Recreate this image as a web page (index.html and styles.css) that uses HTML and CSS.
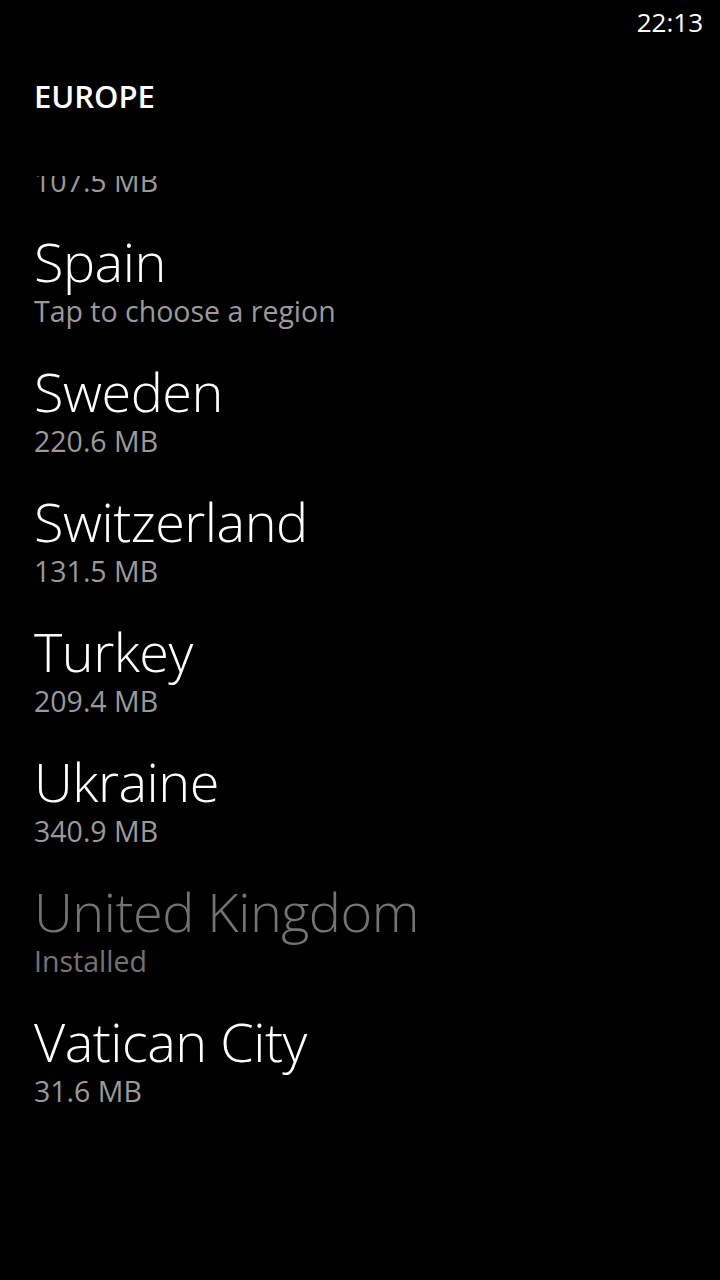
FILE: index.html
```html
<!DOCTYPE html>
<html lang="en">
<head>
    <meta charset="UTF-8">
    <meta name="viewport" content="width=device-width, initial-scale=1.0">
    <title>Europe</title>
    <link rel="stylesheet" href="styles.css">
</head>
<body>

<div class="status-bar">
    <span class="clock">22:13</span>
</div>

<h1 class="page-title">EUROPE</h1>

<div class="list-view">
    <ul class="map-list">
        <li class="map-item">
            <div class="map-name">Slovenia</div>
            <div class="map-info">107.5 MB</div>
        </li>
        <li class="map-item">
            <div class="map-name">Spain</div>
            <div class="map-info">Tap to choose a region</div>
        </li>
        <li class="map-item">
            <div class="map-name">Sweden</div>
            <div class="map-info">220.6 MB</div>
        </li>
        <li class="map-item">
            <div class="map-name">Switzerland</div>
            <div class="map-info">131.5 MB</div>
        </li>
        <li class="map-item">
            <div class="map-name">Turkey</div>
            <div class="map-info">209.4 MB</div>
        </li>
        <li class="map-item">
            <div class="map-name">Ukraine</div>
            <div class="map-info">340.9 MB</div>
        </li>
        <li class="map-item installed">
            <div class="map-name">United Kingdom</div>
            <div class="map-info">Installed</div>
        </li>
        <li class="map-item">
            <div class="map-name">Vatican City</div>
            <div class="map-info">31.6 MB</div>
        </li>
    </ul>
</div>

</body>
</html>
```

FILE: styles.css
```css
html, body {
    height: 100%;
}
body {
    font-family: "Open Sans", "Noto Sans", sans-serif;
    background-color: #000;
    color: #fff;
    margin: 0;
    display: flex;
    flex-direction: column;
    overflow: hidden;
}
.status-bar {
    height: 44px;
    display: flex;
    justify-content: flex-end;
    align-items: center;
    padding: 0 17px;
}
.clock {
    font-size: 26px;
}
.page-title {
    margin: 0;
    padding: 37px 0 0 34px;
    height: 132px;
    font-size: 31px;
    font-weight: 600;
    line-height: 1;
    box-sizing: border-box;
}
.list-view {
    flex: 1;
    overflow: hidden;
}
.map-list {
    list-style: none;
    margin: -79px 0 0;
    padding: 0 0 0 34px;
}
.map-item {
    height: 130px;
    padding-top: 3px;
    box-sizing: border-box;
}
.map-name {
    font-size: 54px;
    font-weight: 300;
    line-height: 62px;
    letter-spacing: -0.5px;
}
.map-info {
    font-size: 28.5px;
    line-height: 38px;
    color: #9a9a9a;
}
.installed .map-name,
.installed .map-info {
    color: #737373;
}
```
